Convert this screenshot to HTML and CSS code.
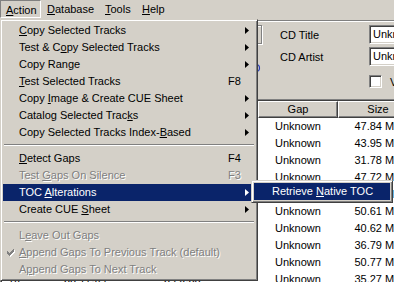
FILE: index.html
```html
<!DOCTYPE html>
<html>
<head>
<meta charset="utf-8">
<link rel="stylesheet" href="styles.css">
</head>
<body>
<div class="window">
  <div class="menubar">
    <div class="mb-item mb-action"><u>A</u>ction</div>
    <div class="mb-item mb-db"><u>D</u>atabase</div>
    <div class="mb-item mb-tools"><u>T</u>ools</div>
    <div class="mb-item"><u>H</u>elp</div>
  </div>
  <div class="etch"></div>
  <div class="form">
    <div class="side">
      <div class="frame"></div>
      <svg class="blue-icon" width="12" height="12" viewBox="0 0 12 12"><circle cx="6" cy="6" r="3.5" fill="none" stroke="#2a3fb8" stroke-width="1.2"/></svg>
    </div>
    <div class="fields">
      <div class="field"><span class="flabel">CD Title</span><div class="input">Unknown Title</div></div>
      <div class="field"><span class="flabel">CD Artist</span><div class="input">Unknown Artist</div></div>
      <div class="field cb"><span class="check"></span><span>Various Artists</span></div>
    </div>
  </div>
  <div class="list">
    <div class="lhead">
      <div class="hc c1">Track</div><div class="hc c2">Start</div><div class="hc c3">Length</div><div class="hc cg">Gap</div><div class="hc cs">Size</div>
    </div>
    <div class="lrow"><span class="c1">1</span><span class="c2">0:00.00</span><span class="c3">4:32.47</span><span class="cg">Unknown</span><span class="cs">47.84 MB</span></div>
    <div class="lrow"><span class="c1">2</span><span class="c2">4:32.47</span><span class="c3">4:21.23</span><span class="cg">Unknown</span><span class="cs">43.95 MB</span></div>
    <div class="lrow"><span class="c1">3</span><span class="c2">8:53.70</span><span class="c3">3:08.65</span><span class="cg">Unknown</span><span class="cs">31.78 MB</span></div>
    <div class="lrow"><span class="c1">4</span><span class="c2">12:02.60</span><span class="c3">4:43.60</span><span class="cg">Unknown</span><span class="cs">47.72 MB</span></div>
    <div class="lrow"><span class="c1">5</span><span class="c2">16:46.45</span><span class="c3">3:47.20</span><span class="cg">Unknown</span><span class="cs">38.21 MB</span></div>
    <div class="lrow"><span class="c1">6</span><span class="c2">20:33.65</span><span class="c3">5:00.72</span><span class="cg">Unknown</span><span class="cs">50.61 MB</span></div>
    <div class="lrow"><span class="c1">7</span><span class="c2">25:34.62</span><span class="c3">4:01.42</span><span class="cg">Unknown</span><span class="cs">40.62 MB</span></div>
    <div class="lrow"><span class="c1">8</span><span class="c2">29:36.29</span><span class="c3">3:38.55</span><span class="cg">Unknown</span><span class="cs">36.79 MB</span></div>
    <div class="lrow"><span class="c1">9</span><span class="c2">33:15.09</span><span class="c3">5:01.70</span><span class="cg">Unknown</span><span class="cs">50.77 MB</span></div>
    <div class="lrow"><span class="c1">10</span><span class="c2">38:17.04</span><span class="c3">3:29.58</span><span class="cg">Unknown</span><span class="cs">35.27 MB</span></div>
  </div>

  <div class="menu">
    <div class="item"><span class="lbl"><u>C</u>opy Selected Tracks</span><span class="key"></span><span class="arr"></span></div>
    <div class="item"><span class="lbl">Test &amp; C<u>o</u>py Selected Tracks</span><span class="key"></span><span class="arr"></span></div>
    <div class="item"><span class="lbl">Copy Range</span><span class="key"></span><span class="arr"></span></div>
    <div class="item"><span class="lbl"><u>T</u>est Selected Tracks</span><span class="key">F8</span><span class="noarr"></span></div>
    <div class="item"><span class="lbl">Copy <u>I</u>mage &amp; Create CUE Sheet</span><span class="key"></span><span class="arr"></span></div>
    <div class="item"><span class="lbl">Catalog Selected Trac<u>k</u>s</span><span class="key"></span><span class="arr"></span></div>
    <div class="item"><span class="lbl">Copy Selected Tracks Index-<u>B</u>ased</span><span class="key"></span><span class="arr"></span></div>
    <div class="sep"></div>
    <div class="item"><span class="lbl"><u>D</u>etect Gaps</span><span class="key">F4</span><span class="noarr"></span></div>
    <div class="item dis"><span class="lbl">Test <u>G</u>aps On Silence</span><span class="key">F3</span><span class="noarr"></span></div>
    <div class="item hl"><span class="lbl">TOC <u>A</u>lterations</span><span class="key"></span><span class="arr"></span></div>
    <div class="item"><span class="lbl">Create CUE <u>S</u>heet</span><span class="key"></span><span class="arr"></span></div>
    <div class="sep"></div>
    <div class="item dis"><span class="lbl">L<u>e</u>ave Out Gaps</span><span class="key"></span><span class="noarr"></span></div>
    <div class="item dis checked"><svg class="tick" width="8" height="8" viewBox="0 0 8 8" shape-rendering="crispEdges"><path fill="#fff" d="M7 1h1v1h-1zM6 2h2v1h-2zM1 3h1v1h-1zM5 3h3v1h-3zM1 4h2v1h-2zM4 4h3v1h-3zM1 5h5v1h-5zM2 6h3v1h-3zM3 7h1v1h-1z"/><path fill="#808080" d="M6 0h1v1h-1zM5 1h2v1h-2zM0 2h1v1h-1zM4 2h3v1h-3zM0 3h2v1h-2zM3 3h3v1h-3zM0 4h5v1h-5zM1 5h3v1h-3zM2 6h1v1h-1z"/></svg><span class="lbl"><u>A</u>ppend Gaps To Previous Track (default)</span><span class="key"></span><span class="noarr"></span></div>
    <div class="item dis"><span class="lbl">A<u>p</u>pend Gaps To Next Track</span><span class="key"></span><span class="noarr"></span></div>
  </div>

  <div class="submenu">
    <div class="item hl sub"><span class="lbl">Retrieve <u>N</u>ative TOC</span></div>
  </div>
</div>
</body>
</html>
```
FILE: styles.css
```css
* { box-sizing: border-box; }
html, body { margin: 0; padding: 0; }
body {
  width: 394px;
  height: 282px;
  overflow: hidden;
  background: #d4d0c8;
  font-family: "Liberation Sans", Arial, sans-serif;
  font-size: 11px;
  color: #000;
}
u { text-decoration: underline; text-underline-offset: 1px; text-decoration-thickness: 1px; }

.window { position: relative; width: 394px; height: 282px; overflow: hidden; }

/* menubar */
.menubar { display: flex; height: 20px; }
.mb-item { height: 18px; line-height: 19px; padding-left: 6px; white-space: nowrap; }
.mb-action {
  width: 41px;
  border: 1px solid;
  border-color: #808080 #fff #fff #808080;
  padding-left: 5px;
  line-height: 18px;
}
.mb-db { width: 58px; }
.mb-tools { width: 37px; }
.etch { height: 2px; border-top: 1px solid #808080; border-bottom: 1px solid #fff; }

/* form */
.form { display: flex; height: 77px; padding-top: 3px; }
.side { width: 263px; flex-shrink: 0; display: flex; flex-direction: column; }
.frame {
  margin-left: 240px;
  width: 22px;
  height: 19px;
  border: 1px solid #808080;
  box-shadow: 1px 1px 0 #fff, inset 1px 1px 0 #fff;
}
.blue-icon { margin-left: 250px; margin-top: 18px; display: block; }
.fields { display: flex; flex-direction: column; padding-left: 17px; flex-shrink: 0; }
.field { display: flex; align-items: center; height: 19px; margin-bottom: 3px; white-space: nowrap; }
.flabel { width: 89px; flex-shrink: 0; }
.input {
  width: 120px;
  flex-shrink: 0;
  height: 19px;
  background: #fff;
  border: 1px solid;
  border-color: #808080 #fff #fff #808080;
  box-shadow: inset 1px 1px 0 #404040, inset -1px -1px 0 #d4d0c8;
  padding-left: 3px;
  line-height: 17px;
}
.field.cb { height: 13px; margin-top: 6px; }
.check {
  width: 13px;
  height: 13px;
  flex-shrink: 0;
  margin-left: 89px;
  margin-right: 8px;
  background: #fff;
  border: 1px solid;
  border-color: #808080 #fff #fff #808080;
  box-shadow: inset 1px 1px 0 #404040, inset -1px -1px 0 #d4d0c8;
}

/* list */
.list {
  width: 520px;
  height: 200px;
  background: #fff;
  border: 1px solid;
  border-color: #808080 #fff #fff #808080;
  box-shadow: inset 1px 1px 0 #404040;
  padding: 1px 0 0 1px;
}
.lhead, .lrow { display: flex; height: 17px; white-space: nowrap; }
.hc {
  height: 17px;
  background: #d4d0c8;
  border: 1px solid;
  border-color: #fff #404040 #404040 #fff;
  box-shadow: inset -1px -1px 0 #808080;
  text-align: center;
  line-height: 15px;
}
.lrow span { line-height: 17px; overflow: hidden; }
.c1 { width: 56px; flex-shrink: 0; padding-left: 6px; }
.c2 { width: 100px; flex-shrink: 0; padding-left: 6px; }
.c3 { width: 100px; flex-shrink: 0; padding-left: 6px; }
.cg { width: 80px; flex-shrink: 0; text-align: center; }
.cs { width: 80px; flex-shrink: 0; text-align: center; }
.lhead .c1, .lhead .c2, .lhead .c3 { padding-left: 0; }

/* menus */
.menu, .submenu {
  position: absolute;
  background: #d4d0c8;
  border: 1px solid;
  border-color: #d4d0c8 #404040 #404040 #d4d0c8;
  box-shadow: inset 1px 1px 0 #fff, inset -1px -1px 0 #808080;
  padding: 2px;
}
.menu { left: 0; top: 19px; width: 258px; }
.submenu { left: 251px; top: 180px; width: 142px; }

.item {
  position: relative;
  display: grid;
  grid-template-columns: 209px 17px 10px;
  align-items: center;
  height: 17px;
  padding-left: 16px;
  white-space: nowrap;
}
.item.sub { display: block; padding-left: 18px; line-height: 17px; }
.lbl, .key { line-height: 17px; }
.arr {
  width: 4px;
  height: 7px;
  background: #000;
  clip-path: polygon(0 0, 100% 50%, 0 100%);
}
.item.hl { background: #0a246a; color: #fff; }
.item.hl .arr { background: #fff; }
.item.dis { color: #808080; text-shadow: 1px 1px 0 #fff; }
.tick { position: absolute; left: 4px; top: 5px; }

.sep {
  height: 2px;
  margin: 3px 1px 4px 1px;
  border-top: 1px solid #808080;
  border-bottom: 1px solid #fff;
}
```
